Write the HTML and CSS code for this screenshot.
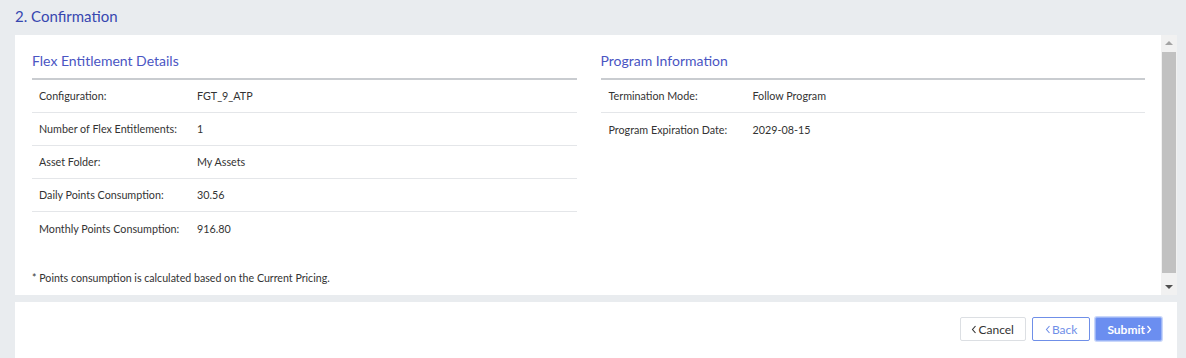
FILE: index.html
```html
<!DOCTYPE html>
<html lang="en">
<head>
  <meta charset="UTF-8">
  <title>Confirmation</title>
  <link rel="stylesheet" href="styles.css">
</head>
<body>

  <h1 class="step-title">2. Confirmation</h1>

  <!-- Details panel -->
  <div class="panel">
    <div class="panel-body">
      <div class="columns">
        <div class="section">
          <h2>Flex Entitlement Details</h2>
          <div class="row"><span class="label">Configuration:</span><span>FGT_9_ATP</span></div>
          <div class="row"><span class="label">Number of Flex Entitlements:</span><span>1</span></div>
          <div class="row"><span class="label">Asset Folder:</span><span>My Assets</span></div>
          <div class="row"><span class="label">Daily Points Consumption:</span><span>30.56</span></div>
          <div class="row"><span class="label">Monthly Points Consumption:</span><span>916.80</span></div>
        </div>
        <div class="section program">
          <h2>Program Information</h2>
          <div class="row"><span class="label">Termination Mode:</span><span>Follow Program</span></div>
          <div class="row"><span class="label">Program Expiration Date:</span><span>2029-08-15</span></div>
        </div>
      </div>
      <p class="note">* Points consumption is calculated based on the Current Pricing.</p>
    </div>

    <div class="scrollbar">
      <div class="arrow up"></div>
      <div class="track"><div class="thumb"></div></div>
      <div class="arrow down"></div>
    </div>
  </div>

  <!-- Footer buttons -->
  <div class="panel footer">
    <button class="btn">
      <svg width="6" height="9" viewBox="0 0 6 9"><path d="M4.5 1 L1.5 4.5 L4.5 8" fill="none" stroke="currentColor" stroke-width="1.1"/></svg>Cancel
    </button>
    <button class="btn btn-outline">
      <svg width="6" height="9" viewBox="0 0 6 9"><path d="M4.5 1 L1.5 4.5 L4.5 8" fill="none" stroke="currentColor" stroke-width="1.1"/></svg>Back
    </button>
    <button class="btn btn-primary">
      Submit<svg width="6" height="9" viewBox="0 0 6 9"><path d="M1.5 1 L4.5 4.5 L1.5 8" fill="none" stroke="currentColor" stroke-width="1.3"/></svg>
    </button>
  </div>

</body>
</html>
```

FILE: styles.css
```css
body {
  margin: 0;
  background: #e9ecef;
  font-family: Lato, "Open Sans", Arial, sans-serif;
  color: #333;
  height: 358px;
  overflow: hidden;
}
.step-title {
  margin: 0;
  padding: 6px 15px 0;
  height: 35px;
  box-sizing: border-box;
  font-size: 15px;
  font-weight: 400;
  color: #3747b0;
  line-height: 20px;
}

/* PANELS */
.panel {
  background: #fff;
  margin: 0 9px 0 15px;
  display: flex;
}
.panel-body {
  flex: 1;
  padding: 16px 16px 0 17px;
  height: 260px;
  box-sizing: border-box;
}
.columns {
  display: flex;
  gap: 24px;
}
.section {
  flex: 1;
}
.section h2 {
  margin: 0;
  font-size: 14px;
  font-weight: 400;
  color: #4a55c3;
  line-height: 20px;
  padding-bottom: 7px;
  border-bottom: 2px solid #c9ccd0;
}
.row {
  display: flex;
  height: 32px;
  align-items: center;
  border-bottom: 1px solid #e4e6e9;
  font-size: 10.75px;
  padding-left: 7px;
  padding-bottom: 1px;
  box-sizing: border-box;
  height: 33px;
}
.row:last-child {
  border-bottom: none;
}
.row .label {
  width: 158px;
}
.program .row {
  padding-left: 8px;
}
.program .row .label {
  width: 144px;
}
.note {
  margin: 25px 0 0;
  font-size: 10.65px;
  line-height: 16px;
}

/* fake scrollbar */
.scrollbar {
  width: 16px;
  background: #f1f1f1;
  display: flex;
  flex-direction: column;
}
.arrow {
  height: 17px;
  position: relative;
}
.arrow::after {
  content: "";
  position: absolute;
  left: 4px;
  border-left: 4px solid transparent;
  border-right: 4px solid transparent;
}
.arrow.up::after {
  top: 6px;
  border-bottom: 4px solid #a3a3a3;
}
.arrow.down::after {
  top: 7px;
  border-top: 4px solid #505050;
}
.track {
  flex: 1;
  padding: 0 1px 5px;
}
.thumb {
  height: 100%;
  background: #c1c1c1;
}

/* FOOTER */
.footer {
  margin-top: 7px;
  height: 60px;
  justify-content: flex-end;
  align-items: flex-start;
  padding: 15px 15px 0 0;
  gap: 5px;
  box-sizing: border-box;
}
.btn {
  height: 24px;
  padding: 0 11px 0 10px;
  font-family: inherit;
  font-size: 12px;
  border-radius: 2px;
  border: 1px solid #dcdfe3;
  background: #fff;
  color: #333;
  display: flex;
  align-items: center;
  gap: 1px;
}
.btn:first-child {
  margin-right: 1px;
}
.btn-outline {
  border-color: #6f8fe8;
  color: #6f8fe8;
  padding: 0 12px 0 12px;
}
.btn-primary {
  background: #6b8ef0;
  border-color: #9bb4f6;
  color: #fff;
  font-weight: 700;
  padding: 0 9px 0 11px;
  box-shadow: 0 0 0 1px #c9d7fa;
}
```
